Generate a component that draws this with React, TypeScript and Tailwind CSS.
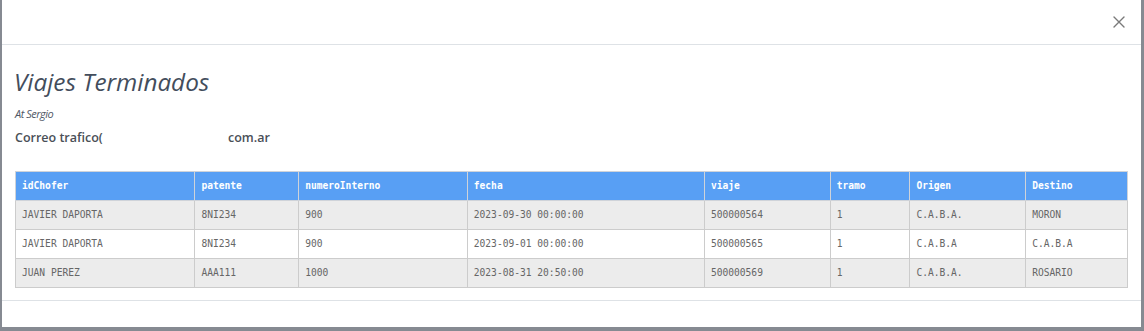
const columns = [
  { key: 'idChofer', width: 'w-[180px]' },
  { key: 'patente', width: 'w-[104px]' },
  { key: 'numeroInterno', width: 'w-[169px]' },
  { key: 'fecha', width: 'w-[238px]' },
  { key: 'viaje', width: 'w-[126px]' },
  { key: 'tramo', width: 'w-[80px]' },
  { key: 'Origen', width: 'w-[116px]' },
  { key: 'Destino', width: 'w-[102px]' },
];

const rows = [
  ['JAVIER DAPORTA', '8NI234', '900', '2023-09-30 00:00:00', '500000564', '1', 'C.A.B.A.', 'MORON'],
  ['JAVIER DAPORTA', '8NI234', '900', '2023-09-01 00:00:00', '500000565', '1', 'C.A.B.A', 'C.A.B.A'],
  ['JUAN PEREZ', 'AAA111', '1000', '2023-08-31 20:50:00', '500000569', '1', 'C.A.B.A.', 'ROSARIO'],
];

export default function App() {
  return (
    <div className="w-[1144px] h-[331px] bg-[#868a92] overflow-hidden">
      <div className="ml-[2px] mr-[3px] h-[327px] bg-white flex flex-col font-['Open_Sans',sans-serif]">
        <header className="h-[45px] flex items-center justify-end pr-[15px] border-b border-[#dee2e6]">
          <svg width="14" height="14" viewBox="0 0 14 14" className="text-[#7a7a7a]">
            <path d="M2 2L12 12M12 2L2 12" stroke="currentColor" strokeWidth="1.4" strokeLinecap="round" />
          </svg>
        </header>
        <main className="flex-1 px-[13px] pt-[21px]">
          <h1 className="text-[24.3px] leading-[32px] italic text-[#434d5c] -ml-px">Viajes Terminados</h1>
          <p className="mt-[9px] text-[11px] leading-[14px] italic tracking-[-0.5px] text-[#505866]">At Sergio</p>
          <p className="mt-[9px] text-[12.5px] leading-[16px] font-semibold text-[#4a4f57] flex">
            <span className="w-[213px]">Correo trafico(</span>
            <span>com.ar</span>
          </p>
          <table className="mt-[25px] border-collapse font-['DejaVu_Sans_Mono',monospace] text-[9.6px]">
            <thead>
              <tr className="bg-[#589ff4] h-[29px]">
                {columns.map((c) => (
                  <th
                    key={c.key}
                    className={`${c.width} border border-[#cfd3d9] px-[6px] text-left font-bold text-white`}
                  >
                    {c.key}
                  </th>
                ))}
              </tr>
            </thead>
            <tbody>
              {rows.map((r, i) => (
                <tr key={i} className={`h-[29px] ${i % 2 === 0 ? 'bg-[#ececec]' : 'bg-white'}`}>
                  {r.map((v, j) => (
                    <td key={j} className="border border-[#cccccc] px-[6px] text-[#666666]">
                      {v}
                    </td>
                  ))}
                </tr>
              ))}
            </tbody>
          </table>
        </main>
        <footer className="h-[27px] border-t border-[#dee2e6]" />
      </div>
    </div>
  );
}
